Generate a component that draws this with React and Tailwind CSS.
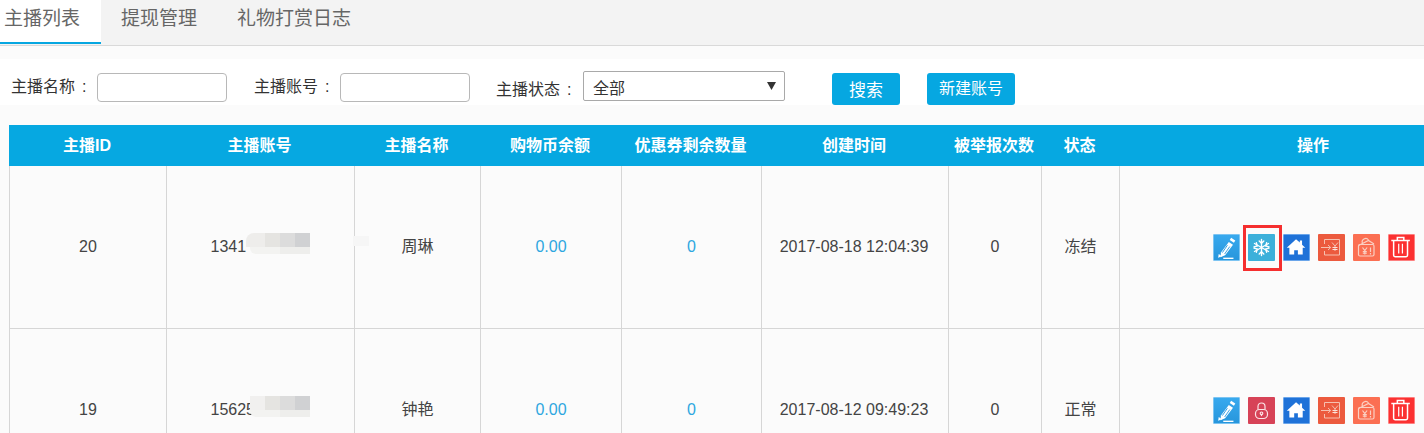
import React from 'react'

const font = { fontFamily: '"Liberation Sans","Noto Sans CJK SC",sans-serif' }

const columns = [
    { label: '主播ID', width: 'w-[157px]' },
    { label: '主播账号', width: 'w-[188px]' },
    { label: '主播名称', width: 'w-[126px]' },
    { label: '购物币余额', width: 'w-[141px]' },
    { label: '优惠券剩余数量', width: 'w-[140px]' },
    { label: '创建时间', width: 'w-[187px]' },
    { label: '被举报次数', width: 'w-[93px]' },
    { label: '状态', width: 'w-[78px]' },
    { label: '操作', width: 'w-[389px]' },
]

const rows = [
    { id: 20, account: '1341', name: '周琳', coin: '0.00', coupon: 0, time: '2017-08-18 12:04:39', reports: 0, status: '冻结', frozen: true },
    { id: 19, account: '15625', name: '钟艳', coin: '0.00', coupon: 0, time: '2017-08-12 09:49:23', reports: 0, status: '正常', frozen: false },
]

function IconBox({ className, children }) {
    return (
        <span className={`flex h-[27px] w-[27px] items-center justify-center rounded-[1px] ${className}`}>
            <svg width="27" height="27" viewBox="0 0 27 27" fill="none">{children}</svg>
        </span>
    )
}

function EditIcon() {
    return (
        <IconBox className='border border-[#7cc4f2] bg-gradient-to-b from-[#38a9ee] to-[#2796dc]'>
            <g transform="translate(-1 -1)">
                <path d="M19.500 4l4.500 3-1.500 2.300-4.500-3z" fill="#fff" />
                <path d="M17 8.500l4.500 3-8.500 11.500-5 2 .5-5z" fill="#fff" />
                <path d="M15.500 12l-5.500 8M18 13.500l-5.500 8" stroke="#2a9be2" strokeWidth="1" />
                <path d="M5.500 25.500l4-1.600-3.400-2.400z" fill="#fff" />
                <path d="M11 26.200h11" stroke="#fff" strokeWidth="1.500" />
            </g>
        </IconBox>
    )
}

function SnowIcon() {
    return (
        <IconBox className='bg-[#3cb0da]'>
            <g stroke="#fff" strokeWidth="1.400" strokeLinecap="round">
                <path d="M13.500 5.500v16M6.500 9.500l14 8M20.500 9.500l-14 8" />
                <path d="M11.200 7l2.300 2.300L15.800 7M11.200 20l2.300-2.300 2.300 2.300M6 12.800l3.200-.9-.8-3.100M21 14.200l-3.200.9.8 3.100M21 12.800l-3.200-.9.8-3.100M6 14.200l3.200.9-.8 3.100" />
            </g>
        </IconBox>
    )
}

function LockIcon() {
    return (
        <IconBox className='bg-[#d74357]'>
            <g stroke="#fbe3e6" strokeWidth="1.200">
                <path d="M10 12.500V9.500a3.500 3.500 0 0 1 7 0v3" />
                <rect x="7.500" y="12.500" width="12" height="9" rx="4" />
                <circle cx="13.500" cy="16.300" r="1.300" />
                <path d="M13.500 17.600v1.500" />
            </g>
        </IconBox>
    )
}

function HomeIcon() {
    return (
        <IconBox className='border border-[#6aa5ea] bg-[#1f72d8]'>
            <g transform="translate(-1 -1)">
                <path d="M14 5.500L4 14.800h2.800V22h5.200v-4.500h4V22h5.200v-7.200H24l-3.500-3.300V7h-2.400v2.200z" fill="#fff" />
            </g>
        </IconBox>
    )
}

function ExportIcon() {
    return (
        <IconBox className='bg-[#ec5a3e]'>
            <g stroke="#f6c0b0" strokeWidth="1">
                <path d="M6.500 10V5.500h15v15.500h-15V17" />
                <path d="M3 13.500h9.500M10 11l2.700 2.500L10 16" />
                <path d="M14 8.500l3 3.500 3-3.500M17 12v5" />
                <path d="M14.500 13.500h5M14.500 15.500h5" stroke="#fbe4dc" />
            </g>
        </IconBox>
    )
}

function BagIcon() {
    return (
        <IconBox className='bg-[#fb6f52]'>
            <g stroke="#fbd0c3" strokeWidth="1.200">
                <path d="M5.500 11.500l10-5 5.500 3.500" />
                <path d="M9.500 9.500a3.500 3.500 0 0 1 6-3.500" />
                <rect x="5.500" y="10.500" width="15.500" height="11.500" rx="1.500" />
                <path d="M9.500 13.500l2.300 3 2.300-3M11.800 16.500v4M9.800 17.500h4M9.800 19.200h4M17.500 13.500v4.500M17.500 19v1.500" />
            </g>
        </IconBox>
    )
}

function TrashIcon() {
    return (
        <IconBox className='border border-[#fd7f7f] bg-[#fb3131]'>
            <g stroke="#fff" strokeWidth="1.600" transform="translate(-1 -1)">
                <path d="M3.500 7h20M10 7V3.800h7V7" />
                <path d="M6 7v16a1.500 1.500 0 0 0 1.500 1.500h12A1.500 1.500 0 0 0 21 23V7" />
                <path d="M11.500 10.500V21M15.500 10.500V21" strokeWidth="1.300" />
            </g>
        </IconBox>
    )
}

function Actions({ frozen }) {
    return (
        <div className='ml-[93px] flex gap-[8px]'>
            <EditIcon />
            {frozen ? (
                <span className='relative'>
                    <SnowIcon />
                    <span className='absolute -left-[5px] -top-[9px] h-[46px] w-[39px] border-[3px] border-[#f52f2f]'></span>
                </span>
            ) : (
                <LockIcon />
            )}
            <HomeIcon />
            <ExportIcon />
            <BagIcon />
            <TrashIcon />
        </div>
    )
}

function Account({ value, frozen }) {
    return (
        <span className='relative inline-block w-[100px] text-left'>
            {value}
            {/* mosaic over the hidden digits */}
            <span className={`absolute top-[-2px] flex h-[14px] ${frozen ? 'left-[35px]' : 'left-[39px]'}`}>
                <span className={`h-full ${frozen ? 'w-[19px] rounded-tl-[8px] bg-[#eeedeb]' : 'w-[15px] bg-[#f1f0ef]'}`}></span>
                <span className='h-full w-[15px] bg-[#e5e4e1]'></span>
                <span className='h-full w-[15px] bg-[#dcdcdc]'></span>
                <span className='h-full w-[15px] bg-[#d0d1d3]'></span>
            </span>
            <span className='absolute left-[39px] top-[12px] flex h-[7px]'>
                <span className='h-full w-[30px] rounded-bl-[6px] bg-[#f3f3f1]'></span>
                <span className='h-full w-[30px] bg-[#eeeeec]'></span>
            </span>
            {frozen && <span className='absolute left-[142px] top-[1px] h-[10px] w-[16px] bg-[#f6f6f6]'></span>}
        </span>
    )
}

function App() {
    return (
        <div style={font} className='h-[433px] w-[1424px] overflow-hidden bg-[#fbfbfb] text-[#333]'>
            <div className='flex h-[46px] border-b border-[#d9d9d9] bg-[#f3f3f3] text-[19px] text-[#666]'>
                <div className='h-[44px] w-[101px] border-b-2 border-[#06a7e1] bg-white pl-[4px] pt-[5px]'>主播列表</div>
                <div className='pl-[20px] pt-[5px]'>提现管理</div>
                <div className='pl-[40px] pt-[5px]'>礼物打赏日志</div>
            </div>

            <div className='mt-[13px] flex h-[46px] items-start bg-white text-[16px]'>
                <span className='ml-[11px] mt-[20px] w-[86px] leading-[16px]'>主播名称<span className='ml-[7px]'>:</span></span>
                <input className='mt-[14px] h-[29px] w-[130px] rounded border border-[#b8b8b8] bg-white' />
                <span className='ml-[27px] mt-[20px] w-[86px] leading-[16px]'>主播账号<span className='ml-[7px]'>:</span></span>
                <input className='mt-[14px] h-[29px] w-[130px] rounded border border-[#b8b8b8] bg-white' />
                <span className='ml-[26px] mt-[23px] w-[87px] leading-[16px]'>主播状态<span className='ml-[7px]'>:</span></span>
                <div className='relative mt-[12px] h-[30px] w-[202px] rounded-[2px] border border-[#a9a9a9] bg-white pl-[9px] leading-[33px]'>
                    全部
                    <svg className='absolute left-[183px] top-[10px]' width="9" height="8" viewBox="0 0 9 8"><path d="M0 0h9L4.500 8z" fill="#333" /></svg>
                </div>
                <button className='ml-[47px] mt-[14px] h-[32px] w-[68px] rounded-[3px] bg-[#06a7e1] text-center text-[17px] leading-[36px] text-white'>搜索</button>
                <button className='ml-[27px] mt-[14px] h-[32px] w-[88px] rounded-[3px] bg-[#06a7e1] text-center text-[16px] leading-[32px] text-white'>新建账号</button>
            </div>

            <table className='ml-[9px] mt-[20px] w-[1499px] table-fixed border-collapse text-[16px] text-[#444]'>
                <thead>
                    <tr className='h-[40px] bg-[#06a8e1] text-white'>
                        {columns.map((col) => (
                            <th key={col.label} className={`${col.width} border border-[#06a8e1] p-0 pr-[2px] text-center font-bold`}>{col.label}</th>
                        ))}
                    </tr>
                </thead>
                <tbody>
                    {rows.map((row) => (
                        <tr key={row.id} className='h-[163px] text-center'>
                            <td className='border border-[#d6d6d6] p-0'>{row.id}</td>
                            <td className='border border-[#d6d6d6] p-0'><Account value={row.account} frozen={row.frozen} /></td>
                            <td className='border border-[#d6d6d6] p-0'>{row.name}</td>
                            <td className='border border-[#d6d6d6] p-0 text-[#2ea7e0]'>{row.coin}</td>
                            <td className='border border-[#d6d6d6] p-0 text-[#2ea7e0]'>{row.coupon}</td>
                            <td className='border border-[#d6d6d6] p-0 pr-[2px]'>{row.time}</td>
                            <td className='border border-[#d6d6d6] p-0'>{row.reports}</td>
                            <td className='border border-[#d6d6d6] p-0'>{row.status}</td>
                            <td className='border border-[#d6d6d6] p-0'><Actions frozen={row.frozen} /></td>
                        </tr>
                    ))}
                </tbody>
            </table>
        </div>
    )
}

export default App
